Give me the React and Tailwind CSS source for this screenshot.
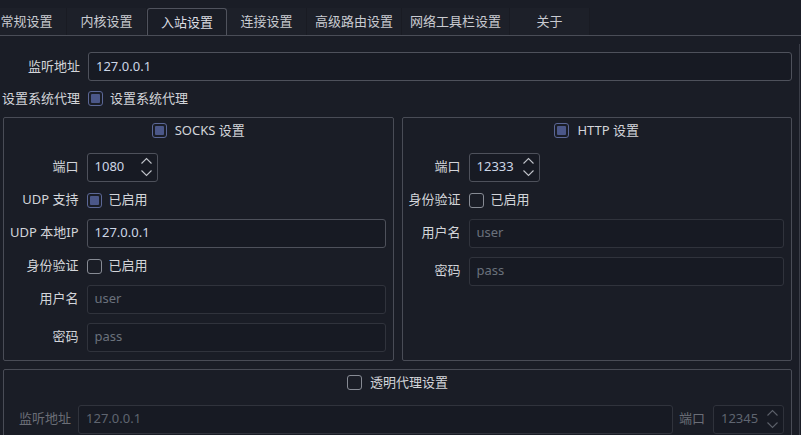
import React from 'react';

const tabs = [
  { label: '常规设置', first: true },
  { label: '内核设置' },
  { label: '入站设置', active: true },
  { label: '连接设置' },
  { label: '高级路由设置' },
  { label: '网络工具栏设置' },
  { label: '关于' },
];

function Check({ on, dim }) {
  if (on) {
    return (
      <span className="w-[15px] h-[15px] shrink-0 rounded-[3px] border border-[#5b6796] p-[2px] flex">
        <span className="flex-1 rounded-[1px] bg-[#4b5788]" />
      </span>
    );
  }
  return (
    <span className={`w-[15px] h-[15px] shrink-0 rounded-[3px] border ${dim ? 'border-[#6d7079]' : 'border-[#878b94]'}`} />
  );
}

function Spin({ value, dim }) {
  return (
    <div className={`w-[71px] h-[29px] shrink-0 flex items-center justify-between pl-[7px] pr-[5px] rounded-[3px] border bg-[#171a23] ${dim ? 'border-[#2f323b] text-[#5f6570]' : 'border-[#4e515b] text-[#cdd6e6]'}`}>
      <span>{value}</span>
      <svg width="11" height="20" viewBox="0 0 11 20" fill="none" stroke={dim ? '#5c606a' : '#c0c3ca'} strokeWidth="1.1">
        <path d="M0.5 6.5 L5.5 1.5 L10.5 6.5" />
        <path d="M0.5 13.5 L5.5 18.5 L10.5 13.5" />
      </svg>
    </div>
  );
}

function Field({ value, placeholder, dim, strong }) {
  const border = strong ? 'border-[#4e515b]' : 'border-[#30333c]';
  return (
    <div className={`h-[29px] flex-1 min-w-0 flex items-center pl-[7px] rounded-[3px] border bg-[#171a23] ${border}`}>
      {value ? (
        <span className={dim ? 'text-[#5f6570]' : 'text-[#cdd6e6]'}>{value}</span>
      ) : (
        <span className="text-[#6a717c]">{placeholder}</span>
      )}
    </div>
  );
}

function Box({ title, on, dim, children, className = '' }) {
  return (
    <div className={`border border-[#494c56] rounded-[2px] pt-[3px] flex flex-col ${className}`}>
      <div className="h-5 flex items-center justify-center gap-[8px]">
        <Check on={on} />
        <span>{title}</span>
      </div>
      <div className="mt-[12px]">{children}</div>
    </div>
  );
}

function Row({ label, children, h = 'h-[29px]' }) {
  return (
    <>
      <div className={`${h} flex items-center justify-end whitespace-nowrap`}>{label}</div>
      <div className={`${h} flex items-center`}>{children}</div>
    </>
  );
}

export default function App() {
  return (
    <div
      className="w-[801px] h-[435px] overflow-hidden bg-[#1a1d26] text-[13px] text-[#d3d5da]"
      style={{ fontFamily: '"Noto Sans", "Noto Sans CJK SC", sans-serif' }}
    >
      <div className="h-[36px] pt-2 flex border-b border-[#4a4d57] overflow-hidden">
        {tabs.map((t) =>
          t.active ? (
            <div
              key={t.label}
              className="min-w-[80px] px-2 h-[28px] flex items-center justify-center bg-[#1a1d26] border-t border-x border-[#50535d] rounded-t-[3px] text-[#dcdee3] relative z-10"
            >
              {t.label}
            </div>
          ) : (
            <div
              key={t.label}
              className={`min-w-[80px] px-2 h-[27px] flex items-center justify-center bg-[#1d2029] border-r border-[#191b23] text-[#c9cbd1] ${t.first ? '-ml-[13px]' : ''}`}
            >
              {t.label}
            </div>
          )
        )}
      </div>

      <div className="mt-2 w-[800px] h-[400px] border-r border-[#3a3d47] pt-2 flex flex-col gap-2">
        <div className="flex items-center pl-[2px] pr-[7px] h-[29px]">
          <div className="w-[78px] text-right shrink-0">监听地址</div>
          <div className="ml-[8px] flex-1 flex">
            <Field value="127.0.0.1" strong />
          </div>
        </div>
        <div className="flex items-center pl-[2px] h-5">
          <div className="w-[78px] text-right shrink-0">设置系统代理</div>
          <div className="ml-[8px] flex items-center gap-[7px]">
            <Check on />
            <span>设置系统代理</span>
          </div>
        </div>

        <div className="pl-[3px] pr-[7px] grid grid-cols-2 gap-x-[8px] h-[244px]">
          <Box title="SOCKS 设置" on className="pb-[8px]">
            <div className="grid grid-cols-[auto_1fr] gap-x-[8px] gap-y-[9px] pl-[6px] pr-[7px]">
              <Row label="端口">
                <Spin value="1080" />
              </Row>
              <Row label="UDP 支持" h="h-[19px]">
                <div className="flex items-center gap-[7px]">
                  <Check on />
                  <span>已启用</span>
                </div>
              </Row>
              <Row label="UDP 本地IP">
                <Field value="127.0.0.1" strong />
              </Row>
              <Row label="身份验证" h="h-[19px]">
                <div className="flex items-center gap-[7px]">
                  <Check />
                  <span>已启用</span>
                </div>
              </Row>
              <Row label="用户名">
                <Field placeholder="user" />
              </Row>
              <Row label="密码">
                <Field placeholder="pass" />
              </Row>
            </div>
          </Box>
          <Box title="HTTP 设置" on>
            <div className="grid grid-cols-[auto_1fr] gap-x-[8px] gap-y-[9px] pl-[6px] pr-[7px]">
              <Row label="端口">
                <Spin value="12333" />
              </Row>
              <Row label="身份验证" h="h-[19px]">
                <div className="flex items-center gap-[7px]">
                  <Check />
                  <span>已启用</span>
                </div>
              </Row>
              <Row label="用户名">
                <Field placeholder="user" />
              </Row>
              <Row label="密码">
                <Field placeholder="pass" />
              </Row>
            </div>
          </Box>
        </div>

        <div className="pl-[3px] pr-[7px]">
          <Box title="透明代理设置" className="h-[80px]">
            <div className="flex items-center pl-[15px] pr-[7px] h-[29px] text-[#6b6e77]">
              <span className="whitespace-nowrap">监听地址</span>
              <div className="ml-[7px] flex-1 flex">
                <Field value="127.0.0.1" dim />
              </div>
              <span className="ml-[6px] mr-[8px] whitespace-nowrap">端口</span>
              <Spin value="12345" dim />
            </div>
          </Box>
        </div>
      </div>
    </div>
  );
}
